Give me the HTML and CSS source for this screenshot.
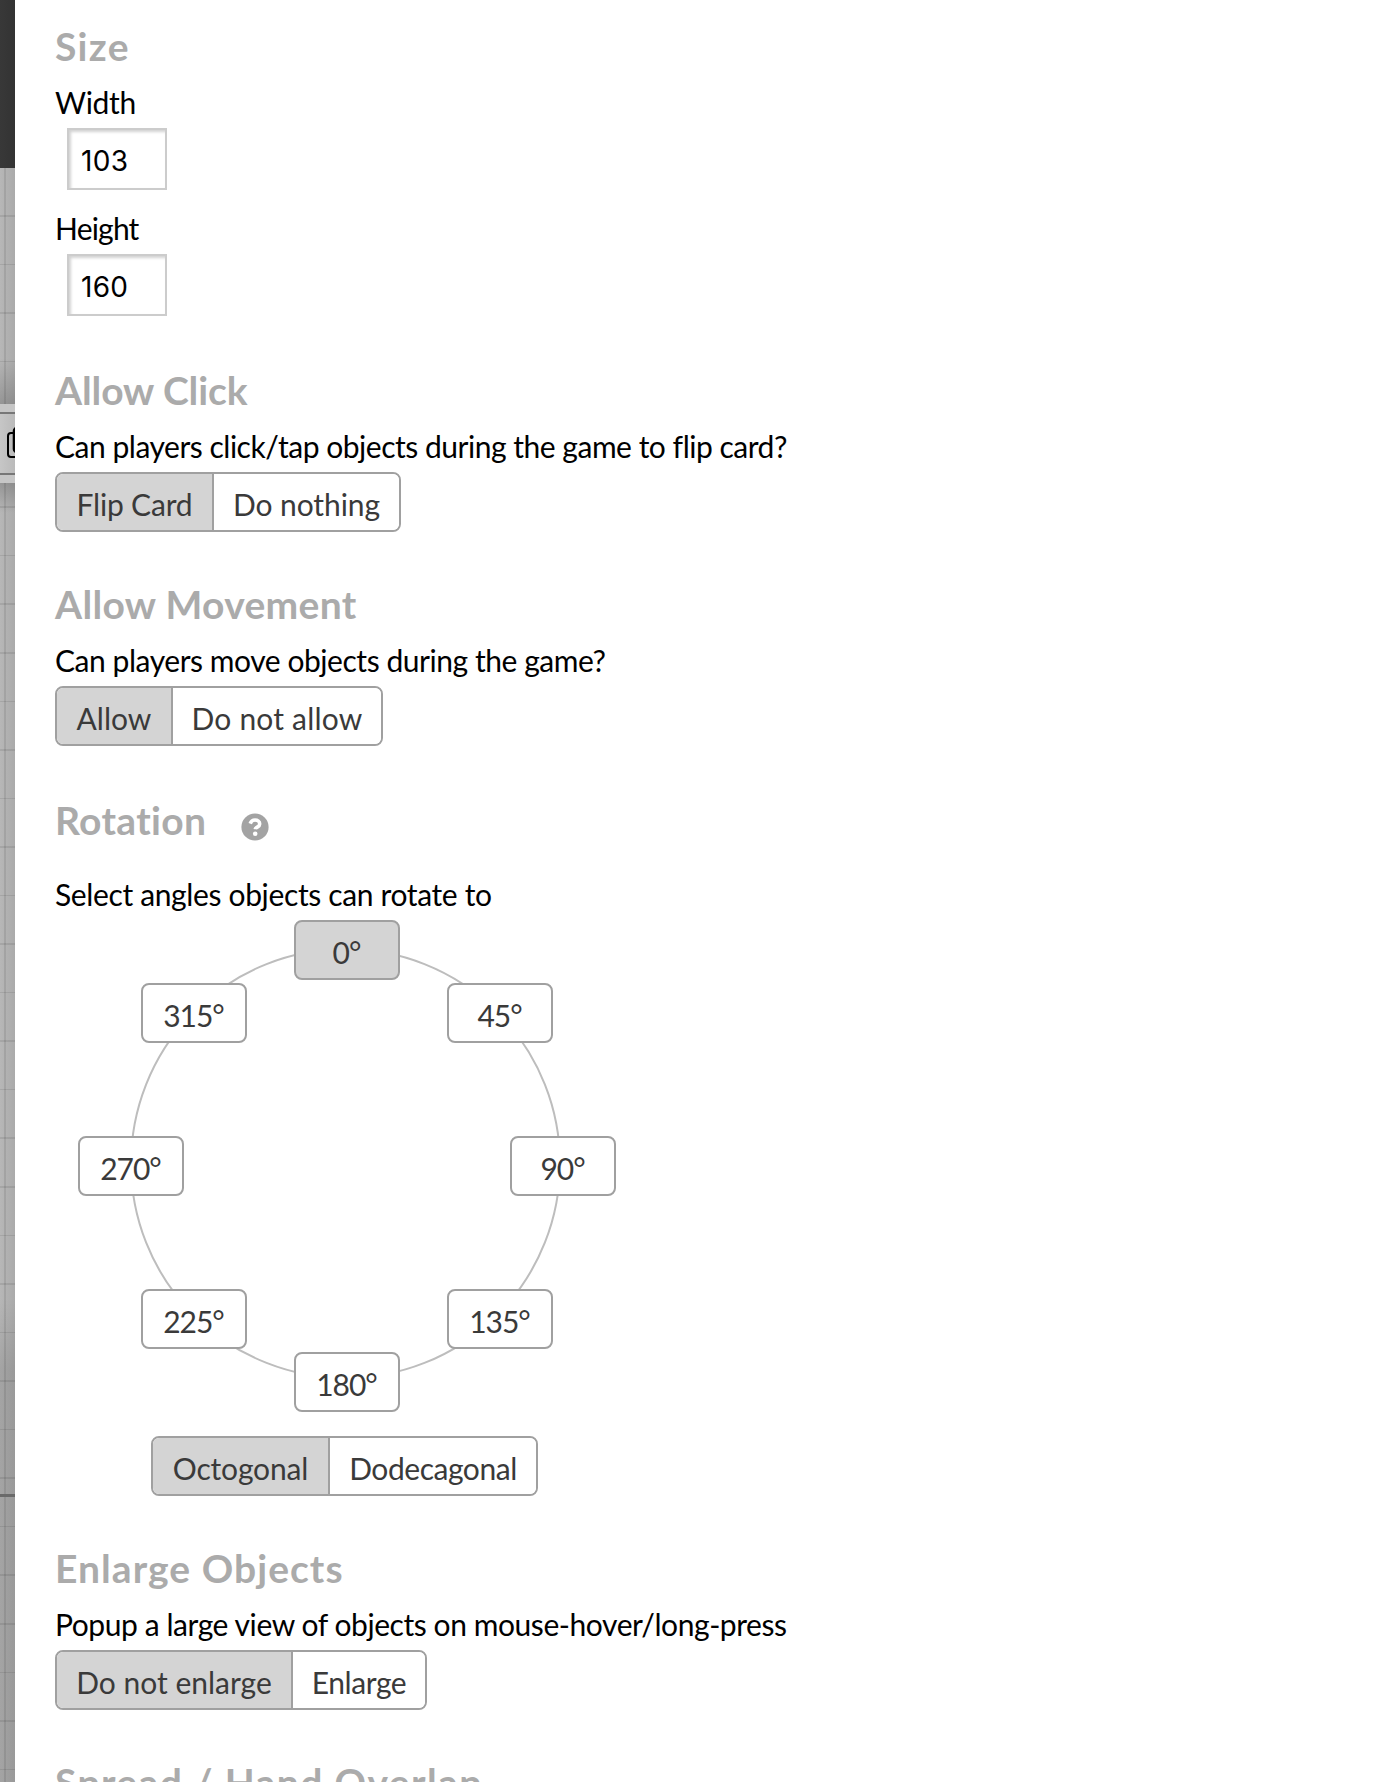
FILE: index.html
```html
<!DOCTYPE html>
<html lang="en">
<head>
<meta charset="utf-8">
<title>Object settings</title>
<link rel="stylesheet" href="styles.css">
</head>
<body>
<div class="app">
  <aside class="board">
    <div class="topbar"></div>
    <div class="table">
      <div class="toolbar">
        <svg class="copy-icon" width="24" height="36" viewBox="0 0 24 36" fill="none" stroke="#000" stroke-width="2"><rect x="1" y="6" width="16" height="24" rx="3"/><rect x="7" y="1" width="16" height="24" rx="3" stroke-width="2.6"/></svg>
      </div>
      <div class="table-edge"></div>
    </div>
  </aside>
  <main class="panel">
    <section class="group group-size">
      <h2 class="title t-size">Size</h2>
      <label class="label l-width" for="w">Width</label>
      <input class="field" id="w" value="103">
      <label class="label next l-height" for="h">Height</label>
      <input class="field" id="h" value="160">
    </section>
    <section class="group">
      <h2 class="title t-click">Allow Click</h2>
      <p class="label l-click">Can players click/tap objects during the game to flip card?</p>
      <div class="toggle"><button class="opt on o-flip">Flip Card</button><button class="opt o-nothing">Do nothing</button></div>
    </section>
    <section class="group group-move">
      <h2 class="title t-move">Allow Movement</h2>
      <p class="label l-move">Can players move objects during the game?</p>
      <div class="toggle"><button class="opt on o-allow">Allow</button><button class="opt o-deny">Do not allow</button></div>
    </section>
    <section class="group">
      <div class="title-row">
        <h2 class="title t-rot">Rotation</h2>
        <svg class="help" width="28" height="28" viewBox="0 0 28 28"><circle cx="14" cy="14" r="13.6" fill="#a3a3a3"/><path d="M9.200 10.600C10 8.300 11.700 7 14 7c2.700 0 4.700 1.500 4.700 3.900 0 3.200-4.100 3-4.500 5.400" fill="none" stroke="#fff" stroke-width="3.6"/><circle cx="14.200" cy="20.800" r="2.300" fill="#fff"/></svg>
      </div>
      <p class="label l-rot">Select angles objects can rotate to</p>
      <div class="dial">
        <div class="ring"></div>
        <button class="angle on a0">0°</button>
        <button class="angle a45">45°</button>
        <button class="angle a90">90°</button>
        <button class="angle a135">135°</button>
        <button class="angle a180">180°</button>
        <button class="angle a225">225°</button>
        <button class="angle a270">270°</button>
        <button class="angle a315">315°</button>
      </div>
      <div class="toggle toggle-shape"><button class="opt on o-oct">Octogonal</button><button class="opt o-dod">Dodecagonal</button></div>
    </section>
    <section class="group">
      <h2 class="title t-enl">Enlarge Objects</h2>
      <p class="label l-enl">Popup a large view of objects on mouse-hover/long-press</p>
      <div class="toggle"><button class="opt on o-noenl">Do not enlarge</button><button class="opt o-enl">Enlarge</button></div>
    </section>
    <section class="group">
      <h2 class="title t-spread">Spread / Hand Overlap</h2>
    </section>
  </main>
</div>
</body>
</html>
```
FILE: styles.css
```css
* { box-sizing: border-box; }
body { margin: 0; background: #fff; font-family: Lato, "Liberation Sans", sans-serif; }
.app { display: flex; height: 1782px; overflow: hidden; }

.board { flex: 0 0 15px; overflow: hidden; }
.topbar { height: 168px; background: linear-gradient(90deg, #383838, #333); }
.table {
  height: 1614px;
  padding-top: 236px;
  background:
    linear-gradient(90deg, transparent 4px, rgba(0,0,0,.09) 4px, rgba(0,0,0,.09) 6px, transparent 6px),
    repeating-linear-gradient(180deg, transparent 0, transparent 47px, rgba(0,0,0,.09) 47px, rgba(0,0,0,.09) 48.550px),
    linear-gradient(180deg, transparent 190px, rgba(0,0,0,.18) 236px, rgba(0,0,0,.18) 315px, transparent 345px, transparent 1130px, rgba(0,0,0,.1) 1200px),
    linear-gradient(90deg, #b7b7b7, #aaa);
}
.toolbar {
  height: 79px;
  padding: 15px 0 0 7px;
  border: solid #c6c6c6;
  border-width: 8px 0;
  background: linear-gradient(90deg, #c6c6c6, #bababa);
  box-shadow: inset 0 2px #777, inset 0 -2px #777;
}
.copy-icon { display: block; }
.table-edge { height: 3px; margin-top: 1011px; background: #6a6a6a; }

.panel { flex: 1; padding: 22px 0 0 40px; background: #fff; }
.group { margin-bottom: 48px; }
.group-size, .group-move { margin-bottom: 50px; }

.title { margin: 0; padding-top: 1px; font-size: 39px; line-height: 47px; font-weight: 700; color: #ababab; white-space: nowrap; font-variant-ligatures: none; }
.title-row { display: flex; gap: 35px; margin-bottom: 32px; }
.title-row + .label { margin-top: 0; }
.help { margin-top: 17px; }

.label { display: block; width: max-content; margin: 14px 0 8px; padding-top: 1px; font-size: 30px; line-height: 35px; color: #000; white-space: nowrap; }
.label.next { margin-top: 20px; }
.field {
  display: block;
  width: 100px;
  height: 62px;
  margin-left: 12px;
  padding: 4px 0 0 12px;
  border: 2px solid #ccc;
  border-radius: 0;
  box-shadow: inset 2px 2px 3px rgba(0,0,0,.18);
  font: 28px Inter, sans-serif;
  letter-spacing: .3px;
  color: #000;
}

.toggle { display: flex; width: max-content; height: 60px; border: 2px solid #a0a0a0; border-radius: 8px; overflow: hidden; }
.opt { padding: 4px 0 0; border: 0; background: #fff; font: 30px/36px Lato, sans-serif; color: #3a3a3a; white-space: nowrap; }
.opt + .opt { border-left: 2px solid #a0a0a0; }
.opt.on, .angle.on { background: #d4d4d4; }

.dial { position: relative; width: 640px; height: 492px; }
.ring { position: absolute; left: 75px; top: 28px; width: 431px; height: 431px; border: 2px solid #bdbdbd; border-radius: 50%; }
.angle {
  position: absolute;
  width: 106px;
  height: 60px;
  padding: 3px 1px 0 0;
  border: 2px solid #a0a0a0;
  border-radius: 8px;
  background: #fff;
  font: 30px/36px Lato, sans-serif;
  letter-spacing: -1px;
  color: #3a3a3a;
}
.a0 { left: 239px; top: 0; }
.a45 { left: 392px; top: 63px; }
.a90 { left: 455px; top: 216px; }
.a135 { left: 392px; top: 369px; }
.a180 { left: 239px; top: 432px; }
.a225 { left: 86px; top: 369px; }
.a270 { left: 23px; top: 216px; }
.a315 { left: 86px; top: 63px; }
.toggle-shape { margin: 24px 0 0 96px; }

.o-flip { width: 155px; letter-spacing: -.2px; }
.o-nothing { width: 187px; letter-spacing: -.1px; }
.o-allow { width: 114px; }
.o-deny { width: 210px; letter-spacing: .2px; }
.o-oct { width: 175px; letter-spacing: -.15px; }
.o-dod { width: 208px; letter-spacing: -.45px; }
.o-noenl { width: 234px; }
.o-enl { width: 134px; letter-spacing: -.4px; }

.t-size { letter-spacing: 1.3px; }
.t-click { letter-spacing: -.1px; }
.t-move { letter-spacing: .33px; }
.t-rot { letter-spacing: .34px; }
.t-enl { letter-spacing: 1.050px; }
.t-spread { letter-spacing: 1.400px; }
.l-width { letter-spacing: -.3px; }
.l-height { letter-spacing: -.8px; }
.l-click { letter-spacing: -.48px; }
.l-move { letter-spacing: -.45px; }
.l-rot { letter-spacing: -.36px; }
.l-enl { letter-spacing: -.43px; }
```
